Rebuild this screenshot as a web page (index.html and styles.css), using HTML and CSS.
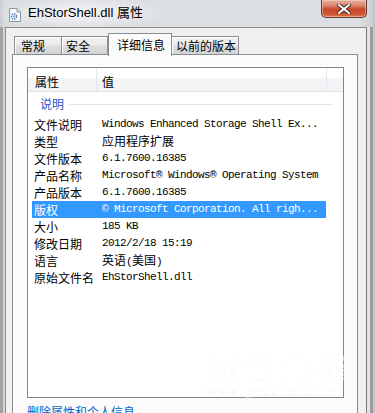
FILE: index.html
```html
<!DOCTYPE html>
<html lang="zh-CN">
<head>
<meta charset="utf-8">
<title>EhStorShell.dll 属性</title>
<link rel="stylesheet" href="styles.css">
</head>
<body>
<div class="window">
  <div class="titlebar">
    <svg class="app-icon" width="12" height="14" viewBox="0 0 12 14">
      <path d="M0.5 0.5 H8 L11.5 4 V13.5 H0.5 Z" fill="#fbfcfd" stroke="#8c96a3"/>
      <path d="M8 0.5 V4 H11.5" fill="#dfe5ec" stroke="#8c96a3"/>
      <circle cx="5" cy="8.5" r="2.6" fill="none" stroke="#5f86b8" stroke-width="1.6" stroke-dasharray="1.4 1"/>
      <circle cx="5" cy="8.5" r="1.3" fill="#8fb0d8"/>
    </svg>
    <span class="title">EhStorShell.dll 属性</span>
    <div class="close">
      <svg width="14" height="10" viewBox="0 0 14 10">
        <path d="M2 1 L12 9 M12 1 L2 9" stroke="#3b2a28" stroke-width="4" stroke-linecap="square"/>
        <path d="M2 1 L12 9 M12 1 L2 9" stroke="#ffffff" stroke-width="2" stroke-linecap="square"/>
      </svg>
    </div>
  </div>
  <div class="client">
    <div class="tabs">
      <div class="tab t1">常规</div>
      <div class="tab t2">安全</div>
      <div class="tab sel">详细信息</div>
      <div class="tab t4">以前的版本</div>
    </div>
    <div class="panel">
      <div class="listview">
        <div class="lv-header">
          <div class="hc hc1">属性</div>
          <div class="hc hc2">值</div>
          <div class="hc hrest"></div>
        </div>
        <div class="group"><span class="gtext">说明</span><span class="gline"></span></div>
        <div class="row"><span class="k">文件说明</span><span class="v">Windows Enhanced Storage Shell Ex...</span></div>
        <div class="row"><span class="k">类型</span><span class="v"><span class="cjk">应用程序扩展</span></span></div>
        <div class="row"><span class="k">文件版本</span><span class="v">6.1.7600.16385</span></div>
        <div class="row"><span class="k">产品名称</span><span class="v">Microsoft® Windows® Operating System</span></div>
        <div class="row"><span class="k">产品版本</span><span class="v">6.1.7600.16385</span></div>
        <div class="row selected"><span class="k">版权</span><span class="v">© Microsoft Corporation. All righ...</span></div>
        <div class="row"><span class="k">大小</span><span class="v">185 KB</span></div>
        <div class="row"><span class="k">修改日期</span><span class="v">2012/2/18 15:19</span></div>
        <div class="row"><span class="k">语言</span><span class="v"><span class="cjk">英语</span>(<span class="cjk">美国</span>)</span></div>
        <div class="row"><span class="k">原始文件名</span><span class="v">EhStorShell.dll</span></div>
      </div>
      <a class="link">删除属性和个人信息</a>
      <div class="watermark">
        <div class="wm-big">绿色先锋</div>
        <div class="wm-small">www.greenxf.com</div>
      </div>
    </div>
  </div>
</div>
</body>
</html>
```
FILE: styles.css
```css
* { box-sizing: border-box; }
html, body { margin: 0; padding: 0; }
body {
  width: 375px;
  height: 413px;
  overflow: hidden;
  font-family: "Noto Sans CJK SC", "Liberation Sans", sans-serif;
  background: #c8c8c8;
}
.window {
  width: 375px;
  height: 413px;
  display: flex;
  flex-direction: column;
  background: linear-gradient(to right,
    #a2a2a2 0, #a2a2a2 3px,
    #d6d6d6 3px, #d6d6d6 5px,
    #f0f0f0 5px, #f0f0f0 367px,
    #e4e4e4 367px, #e4e4e4 370px,
    #9c9c9c 370px, #9c9c9c 373px,
    #c6c6c6 373px);
}
.titlebar {
  height: 27px;
  flex: none;
  display: flex;
  align-items: flex-start;
  background:
    radial-gradient(ellipse 90px 16px at 80px 13px, rgba(255,255,255,0.75), rgba(255,255,255,0) 100%),
    linear-gradient(to right, #c9cdd2 0, #dadde1 6px, #dcdfe3 360px, #cfd2d6 370px, #bfc2c6 375px);
}
.app-icon {
  margin: 8px 0 0 9px;
  flex: none;
}
.title {
  margin: 4px 0 0 7px;
  font-family: "Liberation Sans", "Noto Sans CJK SC", sans-serif;
  font-size: 13px;
  line-height: 17px;
  color: #000;
}
.close {
  margin-left: auto;
  margin-right: 8px;
  width: 46px;
  height: 18px;
  border: 1px solid #5e3b35;
  border-top: none;
  border-radius: 0 0 5px 5px;
  background: linear-gradient(#eab0a2 0, #dc8a74 30%, #c9452b 55%, #d25a35 85%, #e07a4a 100%);
  box-shadow: inset 0 0 0 1px rgba(255,220,210,0.45);
  display: flex;
  align-items: center;
  justify-content: center;
}
.client {
  flex: 1;
  margin: 0 8px 0 5px;
  border-left: 1px solid #8a8a8a;
  border-right: 1px solid #7a7a7a;
  border-top: 1px solid #8a8a8a;
  background: #f0f0f0;
  padding-top: 5px;
  display: flex;
  flex-direction: column;
  min-height: 0;
}
.tabs {
  display: flex;
  align-items: flex-end;
  padding-left: 8px;
  height: 21px;
  flex: none;
  position: relative;
  z-index: 2;
}
.tab {
  height: 18px;
  border: 1px solid #898c95;
  border-bottom: none;
  background: linear-gradient(#f3f3f3 0, #ebebeb 45%, #dedede 55%, #d3d3d3 100%);
  box-shadow: inset 1px 1px 0 #ffffff;
  font-size: 12px;
  line-height: 17px;
  color: #000;
  white-space: nowrap;
}
.t1 { width: 48px; padding-left: 6px; }
.t2 { width: 46px; padding-left: 4px; border-left: none; }
.t4 { width: 67px; padding-left: 4px; border-left: none; }
.sel {
  width: 64px;
  height: 23px;
  margin-bottom: -2px;
  padding-left: 8px;
  background: #fbfbfb;
  box-shadow: none;
  line-height: 21px;
  border-left: 1px solid #898c95;
}
.panel {
  flex: 1;
  position: relative;
  margin: 0 8px 0 6px;
  border: 1px solid #898c95;
  border-bottom: none;
  background: #fbfbfb;
  padding: 12px 13px 0 14px;
  overflow: hidden;
}
.listview {
  height: 331px;
  border: 1px solid #828790;
  background: #ffffff;
  display: flex;
  flex-direction: column;
}
.lv-header {
  height: 24px;
  flex: none;
  display: flex;
  border-bottom: 1px solid #e5e5e5;
  background: linear-gradient(#ffffff 0, #ffffff 42%, #f4f5f7 42%, #f2f3f5 100%);
  font-size: 12px;
}
.hc {
  height: 23px;
  line-height: 23px;
  padding-top: 2px;
  color: #000;
}
.hc1 { width: 69px; padding-left: 7px; border-right: 1px solid #e3e6ea; }
.hc2 { width: 230px; padding-left: 5px; border-right: 1px solid #e3e6ea; }
.hrest { flex: 1; }
.group {
  height: 24px;
  flex: none;
  display: flex;
  align-items: center;
  padding: 0 10px 1px 12px;
}
.gtext {
  font-size: 12px;
  line-height: 14px;
  color: #1f55c9;
}
.gline {
  flex: 1;
  height: 1px;
  margin-left: 5px;
  margin-top: 1px;
  background: #e4e4e4;
}
.row {
  height: 17px;
  flex: none;
  width: 294px;
  margin-left: 4px;
  display: flex;
  align-items: center;
  color: #000;
  white-space: nowrap;
}
.row.selected {
  background: #3399ff;
  color: #ffffff;
}
.k {
  width: 68px;
  padding-left: 2px;
  font-size: 12px;
  line-height: 17px;
}
.v {
  padding-left: 2px;
  font-family: "Liberation Mono", "Noto Sans CJK SC", monospace;
  font-size: 11px;
  letter-spacing: -0.6px;
  line-height: 17px;
}
.cjk {
  font-family: "Noto Sans CJK SC", sans-serif;
  font-size: 12px;
  letter-spacing: 0;
}
.link {
  display: block;
  margin-top: 6px;
  font-size: 12px;
  line-height: 16px;
  color: #0066cc;
}
.watermark {
  position: absolute;
  left: 193px;
  top: 293px;
  color: rgba(255,255,255,0.5);
  -webkit-text-stroke: 1px rgba(0,0,0,0.035);
  font-weight: bold;
  pointer-events: none;
}
.wm-big {
  font-size: 32px;
  line-height: 36px;
  letter-spacing: 5px;
}
.wm-small {
  margin-top: 1px;
  font-family: "Liberation Sans", sans-serif;
  font-size: 12px;
  line-height: 14px;
  letter-spacing: 2px;
}
```
